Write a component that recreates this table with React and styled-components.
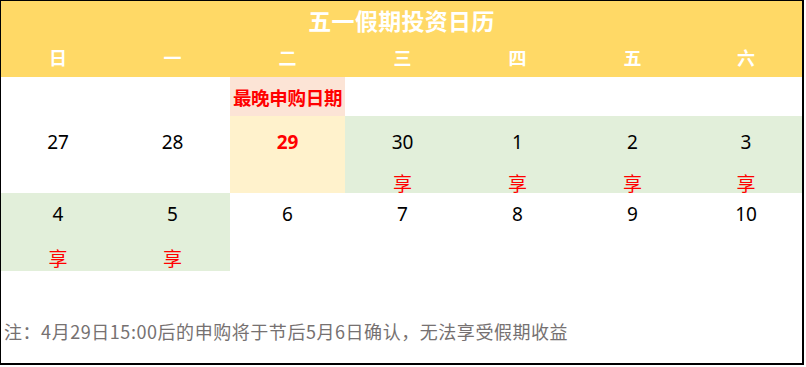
import React from 'react';
import styled, { createGlobalStyle } from 'styled-components';

const GlobalStyle = createGlobalStyle`
  html, body {
    margin: 0;
    padding: 0;
    background: #fff;
  }
  body {
    font-family: 'Noto Sans', 'Noto Sans CJK SC', sans-serif;
  }
`;

const Frame = styled.div`
  width: 801px;
  height: 362px;
  border-style: solid;
  border-color: #000;
  border-width: 1px 2px 2px 1px;
  display: flex;
  flex-direction: column;
  overflow: hidden;
`;

const Header = styled.header`
  background: #ffd966;
  height: 76px;
  display: flex;
  flex-direction: column;
  color: #fff;
  font-weight: 700;
`;

const Title = styled.h1`
  margin: 0;
  height: 38px;
  line-height: 38px;
  font-size: 23px;
  font-weight: 700;
  text-align: center;
  font-family: 'Noto Sans CJK SC', sans-serif;
  letter-spacing: 0.3px;
`;

const Row = styled.div`
  display: grid;
  grid-template-columns: 114px repeat(5, 115px) 112px;
  height: ${({ h }) => h}px;
`;

const Weekday = styled.div`
  display: flex;
  align-items: center;
  justify-content: center;
  font-size: 18px;
  padding-bottom: 2px;
  font-family: 'Noto Sans CJK SC', sans-serif;
`;

const Deadline = styled.div`
  grid-column: 3;
  background: #fce4d6;
  color: #ff0000;
  font-weight: 700;
  font-size: 18.5px;
  display: flex;
  align-items: center;
  justify-content: center;
  font-family: 'Noto Sans CJK SC', sans-serif;
  letter-spacing: -0.3px;
`;

const tones = {
  plain: '#fff',
  buy: '#fff2cc',
  holiday: '#e2efda',
};

const Day = styled.div`
  background: ${({ tone }) => tones[tone]};
  display: flex;
  flex-direction: column;
  align-items: center;
  padding-top: ${({ pad }) => pad}px;
`;

const Num = styled.span`
  font-size: 19px;
  line-height: 24px;
  color: ${({ hot }) => (hot ? '#ff0000' : '#000')};
  font-weight: ${({ hot }) => (hot ? 700 : 400)};
`;

const Tag = styled.span`
  margin-top: ${({ gap }) => gap}px;
  font-size: 19px;
  line-height: 24px;
  color: #ff0000;
  font-family: 'Noto Sans CJK SC', sans-serif;
`;

const Note = styled.p`
  margin: 0;
  padding: 48px 0 0 3px;
  font-size: 18px;
  line-height: 24px;
  color: #767171;
  font-family: 'Noto Sans CJK SC', sans-serif;
  letter-spacing: 0.55px;
`;

const weekdays = ['日', '一', '二', '三', '四', '五', '六'];

const week1 = [
  { n: 27, tone: 'plain' },
  { n: 28, tone: 'plain' },
  { n: 29, tone: 'buy', hot: true },
  { n: 30, tone: 'holiday', enjoy: true },
  { n: 1, tone: 'holiday', enjoy: true },
  { n: 2, tone: 'holiday', enjoy: true },
  { n: 3, tone: 'holiday', enjoy: true },
];

const week2 = [
  { n: 4, tone: 'holiday', enjoy: true },
  { n: 5, tone: 'holiday', enjoy: true },
  { n: 6, tone: 'plain' },
  { n: 7, tone: 'plain' },
  { n: 8, tone: 'plain' },
  { n: 9, tone: 'plain' },
  { n: 10, tone: 'plain' },
];

function Week({ days, h, pad, gap }) {
  return (
    <Row h={h}>
      {days.map(d => (
        <Day key={d.n} tone={d.tone} pad={pad}>
          <Num hot={d.hot}>{d.n}</Num>
          {d.enjoy && <Tag gap={gap}>享</Tag>}
        </Day>
      ))}
    </Row>
  );
}

export default function App() {
  return (
    <>
      <GlobalStyle />
      <Frame>
        <Header>
          <Title>五一假期投资日历</Title>
          <Row h={38}>
            {weekdays.map(w => (
              <Weekday key={w}>{w}</Weekday>
            ))}
          </Row>
        </Header>
        <Row h={39}>
          <Deadline>最晚申购日期</Deadline>
        </Row>
        <Week days={week1} h={77} pad={14} gap={17} />
        <Week days={week2} h={78} pad={9} gap={20} />
        <Note>注：4月29日15:00后的申购将于节后5月6日确认，无法享受假期收益</Note>
      </Frame>
    </>
  );
}
